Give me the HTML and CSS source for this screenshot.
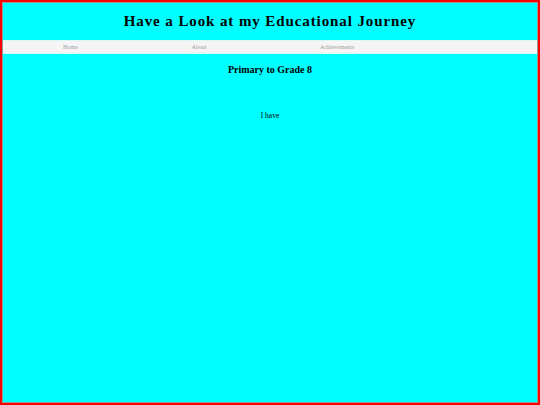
FILE: index.html
```html
<!DOCTYPE html>
<html>
<head>
<meta charset="utf-8">
<link rel="stylesheet" href="styles.css">
</head>
<body>
<div class="page">
  <header class="header">
    <h1 class="title">Have a Look at my Educational Journey</h1>
  </header>
  <nav class="nav">
    <a class="nav-link" href="#">Home</a>
    <a class="nav-link" href="#">About</a>
    <a class="nav-link" href="#">Achievements</a>
  </nav>
  <main class="content">
    <h2 class="section-title">Primary to Grade 8</h2>
    <p class="text">I have</p>
  </main>
</div>
</body>
</html>
```
FILE: styles.css
```css
html, body {
  margin: 0;
  padding: 0;
}
body {
  font-family: "Liberation Serif", serif;
  background: #00ffff;
}
.page {
  box-sizing: border-box;
  width: 540px;
  height: 405px;
  border: 2px solid #ff0000;
  box-shadow: inset 0 0 0 1px #9a9a9a;
  background: #00ffff;
  padding: 1px;
}
.header {
  height: 37px;
  display: flex;
  align-items: center;
  justify-content: center;
}
.title {
  margin: 0;
  font-size: 15px;
  font-weight: bold;
  letter-spacing: 0.9px;
  color: #000;
}
.nav {
  height: 12px;
  background: #f5f5f5;
  border-top: 1px solid #d8f8f8;
  border-bottom: 1px solid #d8f8f8;
  display: flex;
  align-items: center;
  padding-left: 60px;
}
.nav-link {
  width: 128.5px;
  font-size: 6px;
  color: #a09a9a;
  text-decoration: none;
}
.content {
  text-align: center;
}
.section-title {
  margin: 10px 0 0;
  font-size: 10px;
  font-weight: bold;
}
.text {
  margin: 36px 0 0;
  font-size: 7.5px;
}
```
